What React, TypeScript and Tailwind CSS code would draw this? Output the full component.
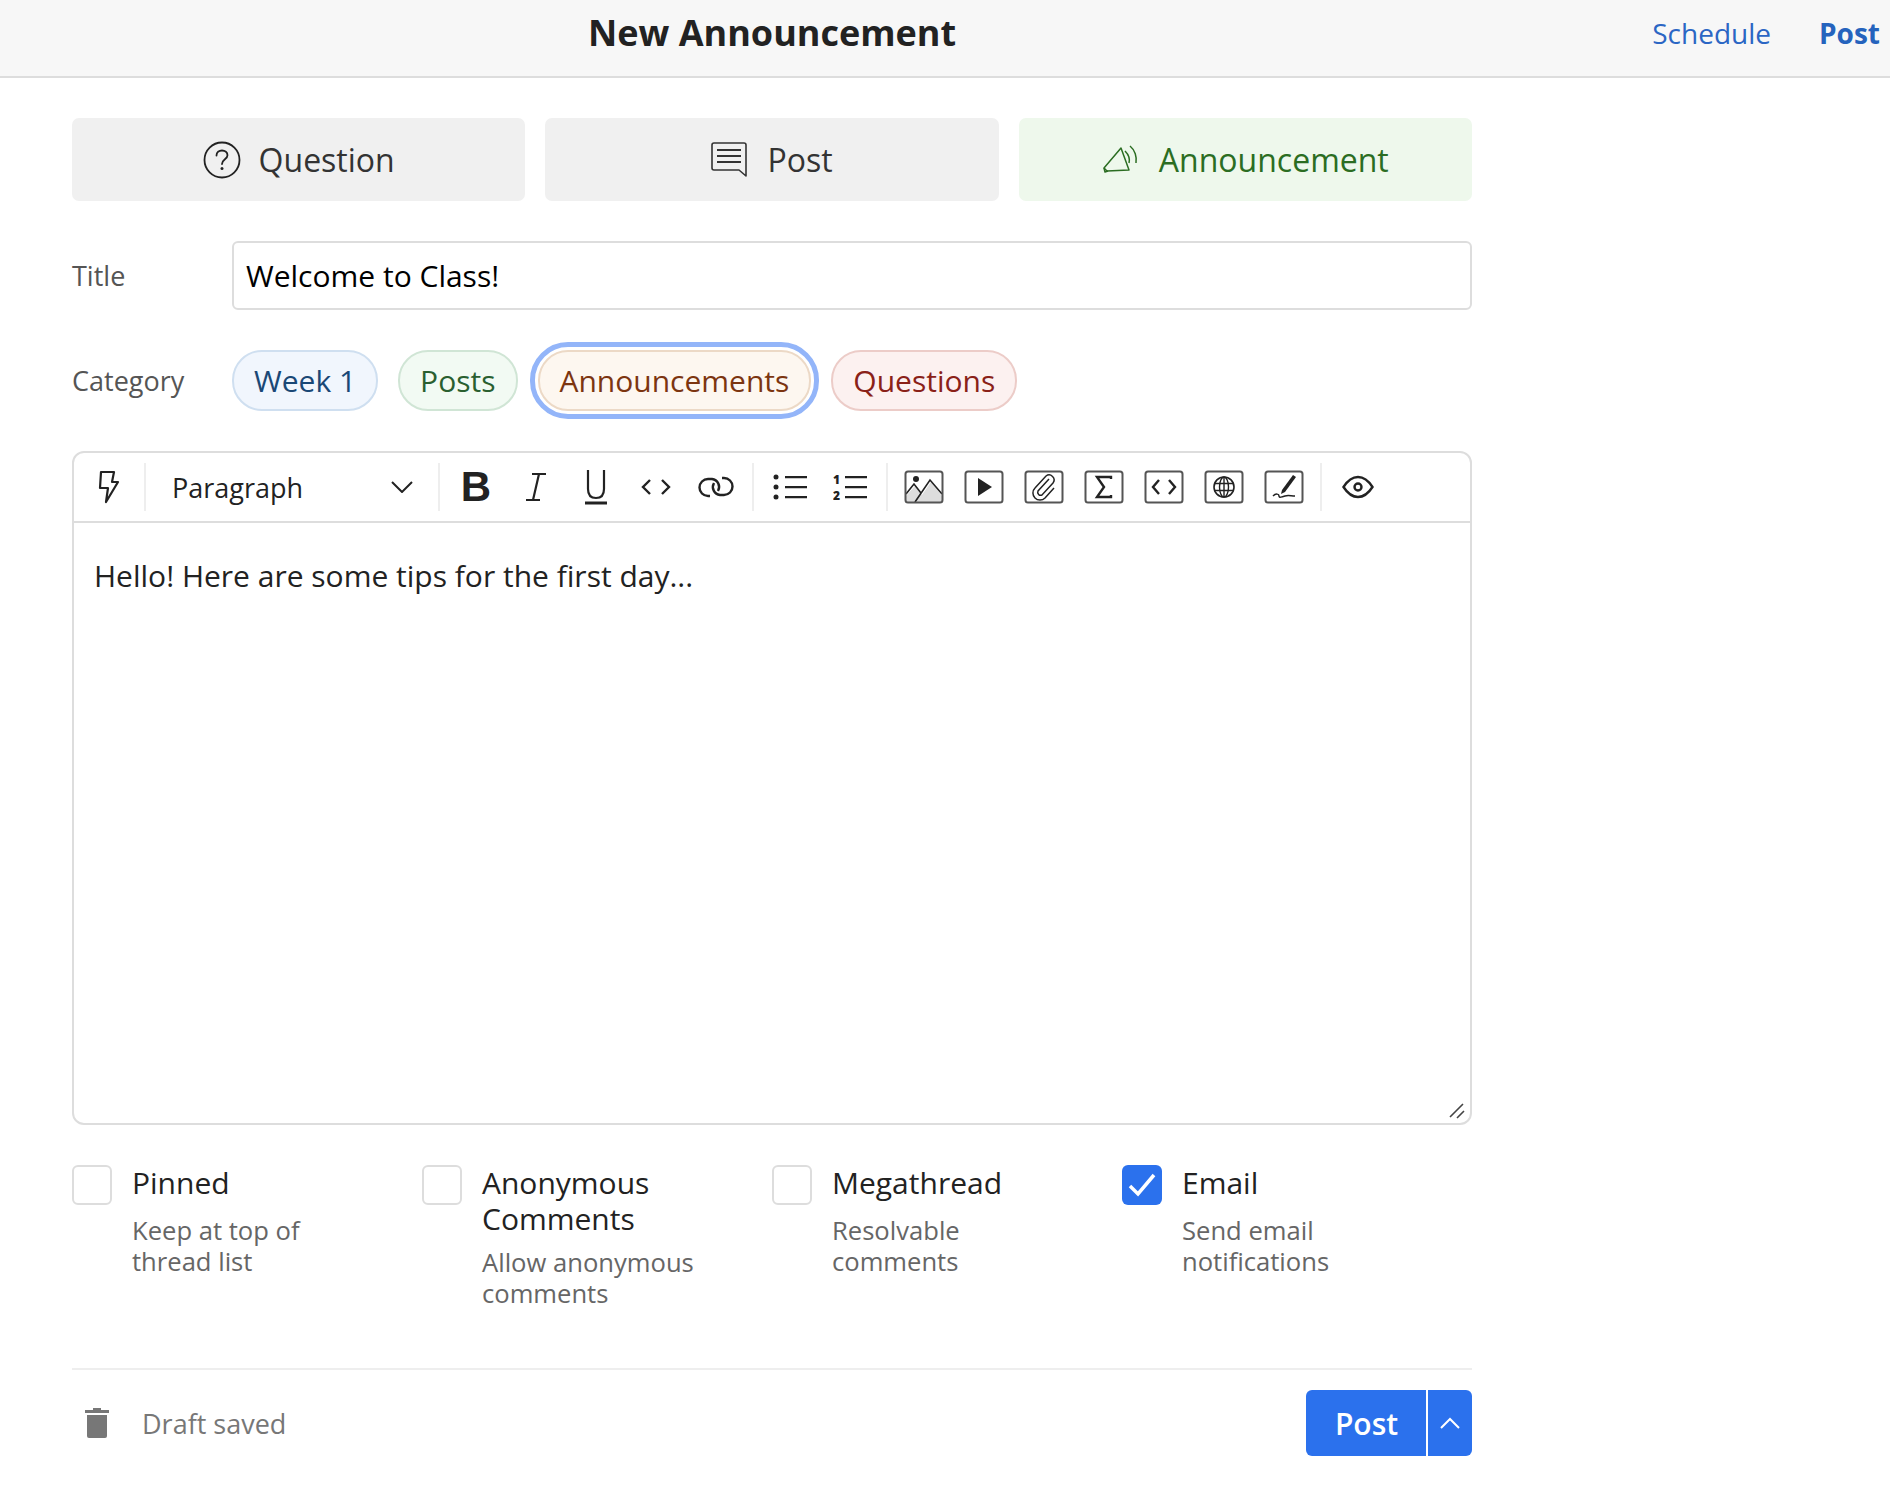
import { ReactNode } from 'react'

function Sep() {
  return <div className="w-[2px] h-[48px] mx-[6px] bg-[#eeeeee] shrink-0" />
}

function Cell({ children }: { children: ReactNode }) {
  return <div className="w-[60px] h-[48px] flex items-center justify-center shrink-0 text-[#222222]">{children}</div>
}

// little framed icon used for the insert buttons
function BoxIcon({ children }: { children: ReactNode }) {
  return (
    <svg width="40" height="34" viewBox="0 0 40 34" fill="none" stroke="#222" strokeWidth="2">
      {children}
      <rect x="1.5" y="1.5" width="37" height="31" rx="2.5" stroke="#555" strokeWidth="2" />
    </svg>
  )
}

const checks = [
  { label: 'Pinned', desc: 'Keep at top of thread list', checked: false },
  { label: 'Anonymous Comments', desc: 'Allow anonymous comments', checked: false },
  { label: 'Megathread', desc: 'Resolvable comments', checked: false },
  { label: 'Email', desc: 'Send email notifications', checked: true },
]

const pillBase = 'h-[61px] flex items-center rounded-[30px] border-2 text-[30px] px-[20px]'

export default function App() {
  return (
    <div className="w-[1890px] h-[1496px] bg-white overflow-hidden font-['Open_Sans',sans-serif] text-[#222222]">
      <div className="h-[78px] bg-[#f7f7f7] border-b-2 border-[#dddddd] flex items-center pl-[588px] pr-[10px] pb-[10px]">
        <h1 className="text-[36px] font-bold text-[#222222]">New Announcement</h1>
        <span className="ml-auto text-[28px] text-[#2b66c4]">Schedule</span>
        <span className="ml-[48px] text-[28px] font-bold text-[#2563bd]">Post</span>
      </div>

      <div className="w-[1400px] ml-[72px] pt-[40px] flex flex-col">
        <div className="flex gap-[20px]">
          <div className="flex-1 h-[83px] bg-[#f0f0f0] rounded-[7px] flex items-center justify-center gap-[18px] text-[32px] text-[#333333]">
            <svg width="38" height="38" viewBox="0 0 38 38" fill="none" stroke="#222" strokeWidth="1.8">
              <circle cx="19" cy="19" r="17.5" />
              <path d="M13.5 14.5c0-3.2 2.5-5 5.5-5s5.500 1.900 5.500 4.800c0 4-5.500 4-5.500 8.700" strokeLinecap="round" />
              <circle cx="19" cy="27.500" r="1.500" fill="#222" stroke="none" />
            </svg>
            <span>Question</span>
          </div>
          <div className="flex-1 h-[83px] bg-[#f0f0f0] rounded-[7px] flex items-center justify-center gap-[20px] text-[32px] text-[#333333]">
            <svg width="36" height="36" viewBox="0 0 36 36" fill="none" stroke="#333" strokeWidth="1.6">
              <path d="M3 1h30a2 2 0 0 1 2 2v31l-7-6H3a2 2 0 0 1-2-2V3a2 2 0 0 1 2-2z" strokeLinejoin="round" />
              <path d="M6 8h24M6 14h24M6 20h24" strokeWidth="2" />
            </svg>
            <span>Post</span>
          </div>
          <div className="flex-1 h-[83px] bg-[#eef8ec] rounded-[7px] flex items-center justify-center gap-[19px] text-[32px] text-[#2b6d22]">
            <svg width="38" height="30" viewBox="0 0 38 30" fill="none" stroke="#2b6d22" strokeWidth="1.5" strokeLinejoin="round">
              <path d="M2 23L19 3l8 22-22 1z" />
              <path d="M2 23l1 4 3-1" />
              <path d="M23 6c3 3 5 8 4 12M28 1c5 4 7 11 6 17" />
            </svg>
            <span>Announcement</span>
          </div>
        </div>

        <div className="flex items-center mt-[40px]">
          <span className="w-[160px] pt-[2px] text-[27px] text-[#555555]">Title</span>
          <div className="flex-1 h-[69px] border-2 border-[#dddddd] rounded-[6px] flex items-center px-[12px] text-[30px] text-black">
            Welcome to Class!
          </div>
        </div>

        <div className="flex items-center mt-[40px]">
          <span className="w-[160px] pt-[2px] text-[27px] text-[#555555]">Category</span>
          <div className="flex items-center">
            <div className={`${pillBase} bg-[#f1f6fd] border-[#cfdff0] text-[#1a4876]`}>Week 1</div>
            <div className={`${pillBase} ml-[20px] bg-[#f2faf3] border-[#d0e5d5] text-[#2a5f30]`}>Posts</div>
            <div className={`${pillBase} ml-[20px] bg-[#fdf7f0] border-[#ecd9c6] text-[#7c3510] outline-[5px] outline-offset-[3px] outline-[#93b5f9]`}>Announcements</div>
            <div className={`${pillBase} ml-[20px] bg-[#fcf1f0] border-[#ecccc8] text-[#8a2118]`}>Questions</div>
          </div>
        </div>

        <div className="mt-[40px] h-[674px] border-2 border-[#dddddd] rounded-[12px] flex flex-col relative">
          <div className="h-[70px] border-b-2 border-[#dddddd] flex items-center">
            <div className="w-[70px] h-[48px] flex items-center justify-center shrink-0">
              <svg width="24" height="34" viewBox="0 0 24 34" fill="none" stroke="#222" strokeWidth="2.200" strokeLinejoin="round">
                <path d="M4 2h13l-2 10h6L9 32l2-14H3z" />
              </svg>
            </div>
            <div className="w-[2px] h-[48px] bg-[#eeeeee] shrink-0" />
            <div className="w-[286px] h-[48px] flex items-center justify-between shrink-0 pl-[26px] pr-[19px] text-[27px]">
              <span className="pt-[2px]">Paragraph</span>
              <svg width="22" height="12" viewBox="0 0 22 12" fill="none" stroke="#222" strokeWidth="2">
                <path d="M1 1l10 10L21 1" />
              </svg>
            </div>
            <Sep />
            <Cell><span className="font-['Liberation_Sans',sans-serif] font-bold text-[42px] leading-none">B</span></Cell>
            <Cell>
              <svg width="22" height="30" viewBox="0 0 22 30" fill="none" stroke="#222" strokeWidth="2.200">
                <path d="M7 2h14M1 28h14M14 2L8 28" />
              </svg>
            </Cell>
            <Cell>
              <svg width="24" height="36" viewBox="0 0 24 36" fill="none" stroke="#222" strokeWidth="2.200">
                <path d="M4 1v19c0 6 3 9 8 9s8-3 8-9V1" />
                <path d="M1 34h22" strokeWidth="3" />
              </svg>
            </Cell>
            <Cell>
              <svg width="30" height="18" viewBox="0 0 30 18" fill="none" stroke="#222" strokeWidth="2.400">
                <path d="M9 2L2 9l7 7M21 2l7 7-7 7" />
              </svg>
            </Cell>
            <Cell>
              <svg width="36" height="22" viewBox="0 0 36 22" fill="none" stroke="#222" strokeWidth="2.400">
                <path d="M12 20H10a8.500 8.500 0 0 1 0-17h4a8 8 0 0 1 6 12" />
                <path d="M24 2h2a8.500 8.500 0 0 1 0 17h-4a8 8 0 0 1-6-12" />
              </svg>
            </Cell>
            <Sep />
            <Cell>
              <svg width="34" height="26" viewBox="0 0 34 26" fill="#222">
                <circle cx="3" cy="3" r="2.500" />
                <circle cx="3" cy="13" r="2.500" />
                <circle cx="3" cy="23" r="2.500" />
                <path d="M12 2h22v2.200H12zM12 12h22v2.200H12zM12 22h22v2.200H12z" />
              </svg>
            </Cell>
            <Cell>
              <svg width="34" height="36" viewBox="0 0 34 36" fill="#222">
                <text x="0" y="14.500" fontSize="12" fontWeight="800" fontFamily="Open Sans, sans-serif">1</text>
                <text x="0" y="31" fontSize="12" fontWeight="800" fontFamily="Open Sans, sans-serif">2</text>
                <path d="M12 7h22v2.200H12zM12 17h22v2.200H12zM12 27h22v2.200H12z" />
              </svg>
            </Cell>
            <Sep />
            <Cell>
              <BoxIcon>
                <path d="M2 32V26l9-10 7 9 9-13 11 14v6z" fill="#dddddd" stroke="none" />
                <path d="M2 24l8-10 7 9M11 32L26 10l12 14" strokeWidth="1.600" />
                <circle cx="12" cy="9" r="3" fill="#222" stroke="none" />
              </BoxIcon>
            </Cell>
            <Cell>
              <BoxIcon>
                <path d="M14 8l14 9-14 9z" fill="#222" stroke="none" />
              </BoxIcon>
            </Cell>
            <Cell>
              <BoxIcon>
                <path d="M25 9L14 21a3 3 0 0 0 4 4l11-12a5 5 0 0 0-7-7L11 18a7 7 0 0 0 10 10l9-10" strokeWidth="1.500" />
              </BoxIcon>
            </Cell>
            <Cell>
              <BoxIcon>
                <path d="M27 9V7H13l7 10-7 10h14v-2" strokeWidth="2.400" />
              </BoxIcon>
            </Cell>
            <Cell>
              <BoxIcon>
                <path d="M15 10l-6 7 6 7M25 10l6 7-6 7" strokeWidth="2.400" />
              </BoxIcon>
            </Cell>
            <Cell>
              <BoxIcon>
                <circle cx="20" cy="17" r="10" strokeWidth="1.600" />
                <ellipse cx="20" cy="17" rx="4.500" ry="10" strokeWidth="1.400" />
                <path d="M10 13.500h20M10 20.500h20M20 7v20" strokeWidth="1.400" />
              </BoxIcon>
            </Cell>
            <Cell>
              <BoxIcon>
                <path d="M29 5l3 2-11 15-4 2 1-4z" fill="#222" stroke="none" />
                <path d="M9 26c3-3 6-2 6 0s3 1 6 0 6 0 10 0" strokeWidth="1.500" />
              </BoxIcon>
            </Cell>
            <Sep />
            <Cell>
              <svg width="32" height="24" viewBox="0 0 32 24" fill="none" stroke="#222" strokeWidth="2.400">
                <path d="M1.500 12C6 5 10 2 16 2s10 3 14.500 10C26 19 22 22 16 22S6 19 1.500 12z" />
                <circle cx="16" cy="12" r="3.500" />
              </svg>
            </Cell>
          </div>
          <div className="flex-1 pl-[20px] pt-[33px] text-[30px] leading-[40px] text-[#222222]">
            Hello! Here are some tips for the first day...
          </div>
          <svg className="absolute right-[5px] bottom-[4px]" width="16" height="16" viewBox="0 0 16 16" fill="none" stroke="#444" strokeWidth="1.600">
            <path d="M1 14L14 1M8 15l7-7" />
          </svg>
        </div>

        <div className="grid grid-cols-4 mt-[40px] h-[203px]">
          {checks.map(c => (
            <div key={c.label} className="flex gap-[20px] items-start pr-[30px]">
              {c.checked ? (
                <div className="w-[40px] h-[40px] shrink-0 rounded-[6px] bg-[#2b71ed] flex items-center justify-center">
                  <svg width="28" height="24" viewBox="0 0 28 24" fill="none" stroke="white" strokeWidth="3.500">
                    <path d="M2 13l8 8L26 2" />
                  </svg>
                </div>
              ) : (
                <div className="w-[40px] h-[40px] shrink-0 rounded-[6px] border-2 border-[#dddddd] bg-white" />
              )}
              <div className="flex flex-col">
                <span className="min-h-[40px] text-[30px] leading-[36px] text-[#222222]">{c.label}</span>
                <span className="mt-[10px] max-w-[250px] text-[25.6px] leading-[31px] text-[#666666]">{c.desc}</span>
              </div>
            </div>
          ))}
        </div>

        <div className="border-t-2 border-[#eeeeee] pt-[20px] flex items-center">
          <svg className="ml-[13px]" width="24" height="30" viewBox="0 0 24 30" fill="#777777">
            <path d="M8 0h8v2h8v3H0V2h8z" />
            <path d="M2 7h20v21a2 2 0 0 1-2 2H4a2 2 0 0 1-2-2z" />
          </svg>
          <span className="ml-[33px] pt-[2px] text-[27px] text-[#777777]">Draft saved</span>
          <div className="ml-auto flex h-[66px] rounded-[6px] overflow-hidden text-white bg-[#2b71ed]">
            <div className="w-[120px] pl-[1px] flex items-center justify-center text-[30px] font-semibold">Post</div>
            <div className="w-[2px] bg-white" />
            <div className="w-[44px] flex items-center justify-center">
              <svg width="20" height="12" viewBox="0 0 20 12" fill="none" stroke="white" strokeWidth="2">
                <path d="M1 11l9-9 9 9" />
              </svg>
            </div>
          </div>
        </div>
      </div>
    </div>
  )
}
